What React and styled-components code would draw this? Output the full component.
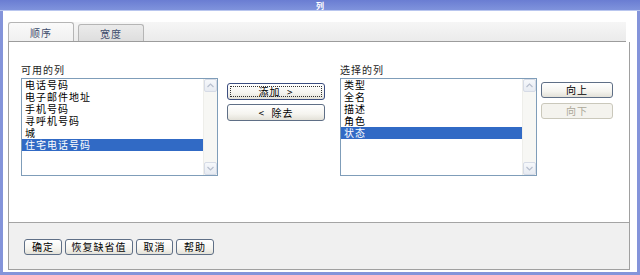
import React from 'react'
import styled, { createGlobalStyle, css } from 'styled-components'

const GlobalStyle = createGlobalStyle`
  html, body {
    margin: 0;
    padding: 0;
    background: #ffffff;
  }
  body {
    font-family: 'Noto Sans CJK SC', 'Noto Sans', sans-serif;
    font-size: 10px;
    letter-spacing: 1px;
    color: #000;
  }
`

const WindowDiv = styled.div`
  width: 640px;
  height: 275px;
  display: flex;
  flex-direction: column;
  box-sizing: border-box;
`

const TitleBar = styled.div`
  height: 10px;
  flex: none;
  display: flex;
  justify-content: center;
  align-items: center;
  background: linear-gradient(#6a7dd2, #7f93dc);
  border-bottom: 1px solid #b9c6ef;
  color: #ffffff;
  font-size: 8px;
  font-weight: bold;
  line-height: 9px;
  letter-spacing: 0;
`

const Frame = styled.div`
  flex: 1;
  display: flex;
  flex-direction: column;
  background: #ffffff;
  border: 3px solid #8494da;
  border-top: none;
  padding: 11px 7px 2px 5px;
  min-height: 0;
`

const Panel = styled.div`
  flex: 1;
  display: flex;
  flex-direction: column;
  min-height: 0;
`

const TabStrip = styled.div`
  height: 19px;
  flex: none;
  display: flex;
  align-items: flex-end;
  gap: 4px;
  background: linear-gradient(#f6f6f6, #ebebeb);
  border-bottom: 1px solid #9c9c9c;
  margin-right: 4px;
`

const Tab = styled.div`
  width: 66px;
  box-sizing: border-box;
  display: flex;
  justify-content: center;
  align-items: center;
  color: #3d4c6c;
  line-height: 12px;
  border: 1px solid #b5b5b5;
  border-bottom: none;
  border-radius: 3px 3px 0 0;
  ${props =>
    props.active
      ? css`
          height: 19px;
          background: linear-gradient(#fafafa, #f0f0f0);
          padding-top: 2px;
        `
      : css`
          height: 17px;
          background: linear-gradient(#ebebeb, #dedede);
          padding-top: 1px;
        `}
`

const Body = styled.div`
  flex: 1;
  display: flex;
  flex-direction: column;
  border: 1px solid #a0a0a0;
  border-top: none;
  min-height: 0;
`

const Content = styled.div`
  flex: 1;
  background: #ffffff;
  padding: 21px 0 0 12px;
  display: flex;
  align-items: flex-start;
`

const Column = styled.div`
  width: ${props => props.width}px;
  margin-left: ${props => props.gap || 0}px;
  margin-top: ${props => props.top || 0}px;
  display: flex;
  flex-direction: column;
  gap: ${props => props.spacing || 0}px;
`

const FieldLabel = styled.div`
  line-height: 13px;
  margin-bottom: 2px;
  color: #1e1e1e;
`

const ListBox = styled.div`
  height: 98px;
  box-sizing: border-box;
  border: 1px solid #7f9db9;
  display: flex;
  background: #ffffff;
`

const Items = styled.div`
  flex: 1;
  display: flex;
  flex-direction: column;
`

const Item = styled.div`
  height: 12px;
  line-height: 12px;
  padding-left: 3px;
  white-space: nowrap;
  ${props =>
    props.selected &&
    css`
      background: #316ac5;
      color: #ffffff;
    `}
`

const ScrollBar = styled.div`
  width: 13px;
  flex: none;
  display: flex;
  flex-direction: column;
  justify-content: space-between;
  background: #f7f7f4;
  border-left: 1px solid #eeeeea;
`

const ScrollArrow = styled.div`
  height: 13px;
  box-sizing: border-box;
  border: 1px solid #d6dbe6;
  border-radius: 2px;
  background: linear-gradient(#f6f8fb, #e7ebf2);
  display: flex;
  justify-content: center;
  align-items: center;
`

const Button = styled.div`
  height: ${props => props.h || 16}px;
  width: ${props => (props.w ? `${props.w}px` : 'auto')};
  box-sizing: border-box;
  display: flex;
  justify-content: center;
  align-items: center;
  line-height: 12px;
  border: 1px solid #5f6f86;
  border-radius: 3px;
  background: linear-gradient(#ffffff 0%, #f5f4ef 60%, #e3e1d8 100%);
  white-space: pre;
  ${props =>
    props.primary &&
    css`
      border-color: #3b4d80;
      outline: 1px dotted #333;
      outline-offset: -4px;
    `}
  ${props =>
    props.disabled &&
    css`
      border-color: #cac8bb;
      background: #f4f3ee;
      color: #aca899;
    `}
`

const BottomBar = styled.div`
  height: 47px;
  flex: none;
  border-top: 1px solid #a4a4a4;
  background: #f0f0f0;
  padding: 16px 0 0 15px;
  box-sizing: border-box;
  display: flex;
  align-items: flex-start;
  gap: 3px;
`

const Chevron = ({ down }) => (
  <svg width="7" height="5" viewBox="0 0 7 5">
    <polyline
      points={down ? '0.5,1 3.5,4 6.5,1' : '0.5,4 3.5,1 6.5,4'}
      fill="none"
      stroke="#b7bfce"
      strokeWidth="1.2"
    />
  </svg>
)

const List = ({ items, selected }) => (
  <ListBox>
    <Items>
      {items.map(item => (
        <Item key={item} selected={item === selected}>
          {item}
        </Item>
      ))}
    </Items>
    <ScrollBar>
      <ScrollArrow>
        <Chevron />
      </ScrollArrow>
      <ScrollArrow>
        <Chevron down />
      </ScrollArrow>
    </ScrollBar>
  </ListBox>
)

const available = ['电话号码', '电子邮件地址', '手机号码', '寻呼机号码', '城', '住宅电话号码']
const chosen = ['类型', '全名', '描述', '角色', '状态']

const App = () => (
  <WindowDiv>
    <GlobalStyle />
    <TitleBar>列</TitleBar>
    <Frame>
      <Panel>
        <TabStrip>
          <Tab active>顺序</Tab>
          <Tab>宽度</Tab>
        </TabStrip>
        <Body>
          <Content>
            <Column width={197}>
              <FieldLabel>可用的列</FieldLabel>
              <List items={available} selected="住宅电话号码" />
            </Column>
            <Column width={98} gap={9} top={20} spacing={4}>
              <Button h={17} primary>{'添加  >'}</Button>
              <Button h={17}>{'<  除去'}</Button>
            </Column>
            <Column width={197} gap={15}>
              <FieldLabel>选择的列</FieldLabel>
              <List items={chosen} selected="状态" />
            </Column>
            <Column width={72} gap={4} top={19} spacing={5}>
              <Button>向上</Button>
              <Button disabled>向下</Button>
            </Column>
          </Content>
          <BottomBar>
            <Button w={38}>确定</Button>
            <Button w={68}>恢复缺省值</Button>
            <Button w={37}>取消</Button>
            <Button w={38}>帮助</Button>
          </BottomBar>
        </Body>
      </Panel>
    </Frame>
  </WindowDiv>
)

export default App
